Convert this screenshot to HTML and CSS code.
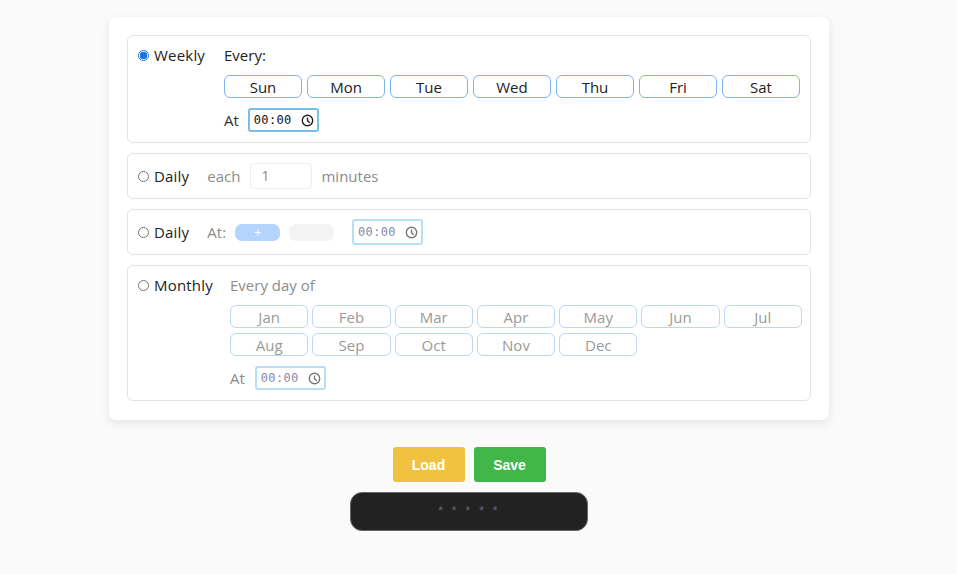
FILE: index.html
```html
<!DOCTYPE html>
<html>
<head>
<meta charset="utf-8">
<link rel="stylesheet" href="styles.css">
</head>
<body>
<div class="page">
  <div class="card">
    <div class="sect">
      <label class="lbl lbl-weekly"><span class="radio on"></span>Weekly</label>
      <div class="body">
        <div class="line">Every:</div>
        <div class="days">
          <button class="day">Sun</button><button class="day">Mon</button><button class="day">Tue</button><button class="day">Wed</button><button class="day">Thu</button><button class="day">Fri</button><button class="day">Sat</button>
        </div>
        <div class="atrow"><span>At</span>
          <span class="time active"><span class="tv">00:00</span><svg class="clk" viewBox="0 0 14 14"><circle cx="7" cy="7" r="5.6" fill="none" stroke="currentColor" stroke-width="1.5"/><path d="M7 3.8V7.2L9.4 9.4" fill="none" stroke="currentColor" stroke-width="1.5"/></svg></span>
        </div>
      </div>
    </div>
    <div class="sect row">
      <label class="lbl"><span class="radio"></span>Daily</label>
      <span class="muted">each</span>
      <span class="num">1</span>
      <span class="muted">minutes</span>
    </div>
    <div class="sect row">
      <label class="lbl"><span class="radio"></span>Daily</label>
      <span class="muted">At:</span>
      <button class="pm plus">+</button>
      <button class="pm minus">-</button>
      <span class="time dim tall"><span class="tv">00:00</span><svg class="clk" viewBox="0 0 14 14"><circle cx="7" cy="7" r="5.6" fill="none" stroke="currentColor" stroke-width="1.5"/><path d="M7 3.8V7.2L9.4 9.4" fill="none" stroke="currentColor" stroke-width="1.5"/></svg></span>
    </div>
    <div class="sect">
      <label class="lbl lbl-monthly"><span class="radio"></span>Monthly</label>
      <div class="body">
        <div class="line muted">Every day of</div>
        <div class="months">
          <button class="mon">Jan</button><button class="mon">Feb</button><button class="mon">Mar</button><button class="mon">Apr</button><button class="mon">May</button><button class="mon">Jun</button><button class="mon">Jul</button>
          <button class="mon">Aug</button><button class="mon">Sep</button><button class="mon">Oct</button><button class="mon">Nov</button><button class="mon">Dec</button>
        </div>
        <div class="atrow muted mat"><span>At</span>
          <span class="time dim"><span class="tv">00:00</span><svg class="clk" viewBox="0 0 14 14"><circle cx="7" cy="7" r="5.6" fill="none" stroke="currentColor" stroke-width="1.5"/><path d="M7 3.8V7.2L9.4 9.4" fill="none" stroke="currentColor" stroke-width="1.5"/></svg></span>
        </div>
      </div>
    </div>
  </div>
  <div class="actions">
    <button class="act load">Load</button>
    <button class="act save">Save</button>
  </div>
  <div class="expr">* * * * *</div>
</div>
</body>
</html>
```
FILE: styles.css
```css
html, body { margin: 0; padding: 0; background: #fafafa; }
body { font-family: "Open Sans", "Noto Sans", sans-serif; color: #222; }
.page { width: 720px; margin: 17px 0 0 109px; }
.card {
  background: #fff; border-radius: 7px;
  box-shadow: 0 3px 10px rgba(0,0,0,0.09);
  padding: 18px 18px 19px 18px;
  display: flex; flex-direction: column; gap: 10px;
}
.sect {
  border: 1px solid #e4e4e4; border-radius: 6px;
  padding: 9px 8px 10px 9px;
  display: flex; align-items: flex-start;
  font-size: 15px;
}
.sect.row { align-items: center; padding-bottom: 9px; }
.lbl { display: flex; align-items: center; height: 20px; margin-right: 18px; color: #222; letter-spacing: 0.2px; flex-shrink: 0; }
.lbl-weekly { width: 69px; }
.lbl-monthly { width: 75px; }
.radio {
  width: 9px; height: 9px; border: 1px solid #777; border-radius: 50%;
  margin: 0 5px 0 1px; box-sizing: content-box; background: #fff; flex-shrink: 0;
}
.radio.on { border-color: #1a73e8; background: radial-gradient(circle, #1a73e8 0 3.5px, #fff 4px); }
.body { flex: 1; display: flex; flex-direction: column; }
.line { height: 20px; line-height: 20px; }
.days { display: flex; gap: 5px; margin-top: 10px; }
.day {
  width: 78px; height: 23px; padding: 0; background: #fff;
  border: 1px solid #7fb2f0; border-radius: 6px;
  font: 15px "Open Sans", sans-serif; color: #222;
}
.atrow { display: flex; align-items: center; gap: 9px; margin-top: 10px; color: #333; }
.mat { gap: 10px; }
.time {
  display: inline-flex; align-items: center; justify-content: space-between;
  font: 12px "DejaVu Sans Mono", monospace; height: 24px; box-sizing: border-box;
  width: 71px; border-radius: 3px; padding: 0 3px 0 4px; background: #fff;
}
.tv { letter-spacing: 0.3px; }
.clk { width: 13px; height: 13px; }
.time.active { border: 2px solid #74c0e6; color: #111; }
.time.active .clk { color: #222; }
.time.dim { border: 2px solid #b5e0f4; color: #8a8aa8; }
.time.dim .clk { color: #777; }
.time.tall { height: 26px; margin-left: 18px; }
.muted { color: #8c8c8c; }
.num {
  width: 62px; height: 26px; box-sizing: border-box; margin: 0 9px 0 10px;
  border: 1px solid #eee; border-radius: 4px; padding: 0 10px;
  font: 14px/24px "Open Sans", sans-serif; color: #b07a8a; background: #fff;
}
.pm {
  width: 45px; height: 17px; border: 0; border-radius: 7px; padding: 0;
  font: 13px "Open Sans", sans-serif; color: #fff; line-height: 17px;
}
.plus { background: #b3d4fc; margin-left: 9px; }
.minus { background: #f4f4f4; margin-left: 9px; }
.months { display: grid; grid-template-columns: repeat(7, 1fr); column-gap: 4px; row-gap: 5px; margin-top: 10px; }
.mon {
  height: 23px; padding: 0; background: #fff;
  border: 1px solid #b9d7fa; border-radius: 6px;
  font: 15px "Open Sans", sans-serif; color: #9a9a9a;
}
.actions { display: flex; justify-content: center; gap: 9px; margin-top: 27px; }
.act {
  width: 72px; height: 35px; border: 0; border-radius: 3px;
  font: bold 14px "Liberation Sans", Arial, sans-serif; color: #fff;
}
.load { background: #f0c23f; }
.save { background: #41b649; }
.expr {
  width: 238px; height: 39px; box-sizing: border-box; margin: 10px auto 0;
  background: #222; border: 1px solid #666; border-radius: 12px;
  color: #5f6670; text-align: center; font: 13px "Liberation Sans", sans-serif;
  padding-top: 10px; letter-spacing: 2.5px;
}
```
